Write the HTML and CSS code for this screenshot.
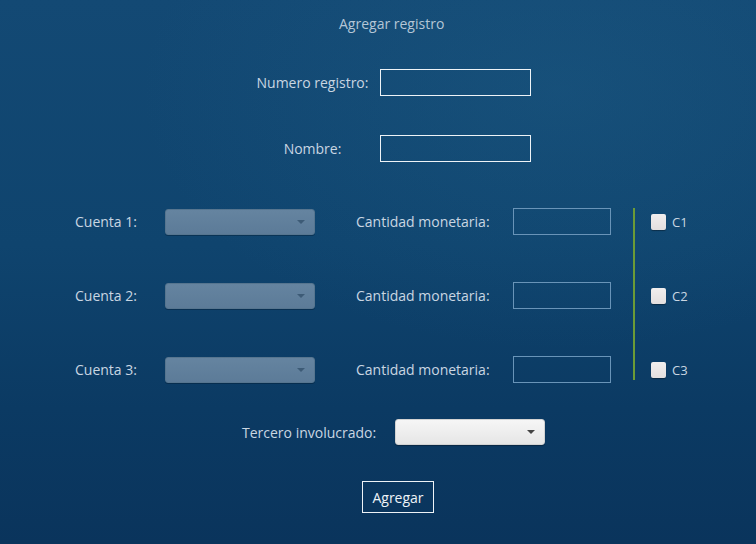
FILE: index.html
```html
<!DOCTYPE html>
<html lang="es">
<head>
<meta charset="utf-8">
<title>Agregar registro</title>
<link rel="stylesheet" href="styles.css">
</head>
<body>
<main class="form">
  <h1 class="title">Agregar registro</h1>

  <div class="pair pair-first">
    <label class="pair-label">Numero registro:</label>
    <input class="field-white" type="text">
  </div>
  <div class="pair pair-second">
    <label class="pair-label">Nombre:</label>
    <input class="field-white" type="text">
  </div>

  <section class="accounts">
    <span class="lbl">Cuenta 1:</span>
    <div class="combo combo-dark"><span class="arrow"></span></div>
    <span class="lbl">Cantidad monetaria:</span>
    <input class="field-blue" type="text">
    <div class="divider"></div>
    <label class="check"><span class="box"></span>C1</label>

    <span class="lbl">Cuenta 2:</span>
    <div class="combo combo-dark"><span class="arrow"></span></div>
    <span class="lbl">Cantidad monetaria:</span>
    <input class="field-blue" type="text">
    <label class="check"><span class="box"></span>C2</label>

    <span class="lbl">Cuenta 3:</span>
    <div class="combo combo-dark"><span class="arrow"></span></div>
    <span class="lbl">Cantidad monetaria:</span>
    <input class="field-blue" type="text">
    <label class="check"><span class="box"></span>C3</label>
  </section>

  <div class="third">
    <span class="lbl third-label">Tercero involucrado:</span>
    <div class="combo combo-light"><span class="arrow"></span></div>
  </div>

  <div class="actions">
    <button class="btn" type="button">Agregar</button>
  </div>
</main>
</body>
</html>
```

FILE: styles.css
```css
html, body {
  margin: 0;
  padding: 0;
  height: 100%;
}

body {
  width: 756px;
  height: 544px;
  overflow: hidden;
  font-family: "Open Sans", "Noto Sans", "Liberation Sans", sans-serif;
  font-size: 14px;
  color: #c6d4e1;
  background:
    radial-gradient(ellipse 420px 260px at 560px 90px, rgba(40, 110, 150, 0.22), rgba(40, 110, 150, 0) 100%),
    linear-gradient(180deg, #134974 0%, #0f446e 45%, #0b3a63 75%, #0a345c 100%);
}

.form {
  display: flex;
  flex-direction: column;
}

.title {
  margin: 14px 0 0 0;
  padding-left: 339px;
  font-size: 14px;
  font-weight: normal;
  line-height: 20px;
  color: #b4c6d6;
}

.pair {
  display: flex;
  align-items: center;
  padding-left: 256px;
}

.pair-first {
  margin-top: 35px;
}

.pair-second {
  margin-top: 39px;
}

.pair-label {
  width: 113px;
  margin-right: 11px;
  text-align: center;
  white-space: nowrap;
  color: #c9d6e2;
}

.field-white {
  box-sizing: border-box;
  width: 151px;
  height: 27px;
  margin: 0;
  border: 1px solid #eef3f7;
  background: transparent;
  outline: none;
}

.accounts {
  display: grid;
  grid-template-columns: 90px 191px 157px 120px 18px auto;
  grid-template-rows: 27px 27px 27px;
  row-gap: 47px;
  align-items: center;
  margin-top: 46px;
  padding-left: 75px;
}

.lbl {
  white-space: nowrap;
  color: #c9d6e2;
}

.combo {
  position: relative;
  box-sizing: border-box;
  width: 150px;
  height: 26px;
  border-radius: 3px;
}

.combo-dark {
  margin-top: 1px;
  background: linear-gradient(180deg, #6584a0 0%, #5c7b98 100%);
  border: 1px solid #56758f;
  box-shadow: 0 1px 0 rgba(0, 20, 40, 0.35);
}

.combo-dark .arrow {
  border-top-color: #3d5b76;
}

.arrow {
  position: absolute;
  right: 9px;
  top: 10px;
  width: 0;
  height: 0;
  border-left: 4px solid transparent;
  border-right: 4px solid transparent;
  border-top: 4px solid #444;
}

.field-blue {
  box-sizing: border-box;
  width: 98px;
  height: 27px;
  margin: 0;
  border: 1px solid #6994b8;
  background: transparent;
  outline: none;
}

.divider {
  grid-column: 5;
  grid-row: 1 / 4;
  align-self: stretch;
  width: 2px;
  margin-bottom: 3px;
  background: #6c9b37;
}

.check {
  grid-column: 6;
  display: flex;
  align-items: center;
  font-size: 13px;
  color: #c9d6e2;
}

.box {
  display: inline-block;
  width: 15px;
  height: 16px;
  margin-right: 6px;
  border-radius: 2px;
  background: linear-gradient(180deg, #f1eeee 0%, #e3dfdf 100%);
  box-shadow: 0 1px 1px rgba(0, 0, 0, 0.35);
}

.third {
  display: flex;
  align-items: center;
  margin-top: 36px;
  padding-left: 242px;
}

.third-label {
  width: 153px;
}

.combo-light {
  background: linear-gradient(180deg, #f6f6f6 0%, #e6e6e6 100%);
  border: 1px solid #d2d2d2;
  box-shadow: 0 1px 1px rgba(0, 0, 0, 0.3);
}

.actions {
  display: flex;
  margin-top: 36px;
  padding-left: 362px;
}

.btn {
  box-sizing: border-box;
  width: 72px;
  height: 32px;
  margin: 0;
  padding: 0;
  border: 1px solid #eef3f7;
  background: transparent;
  color: #eef3f7;
  font-family: "Open Sans", "Noto Sans", "Liberation Sans", sans-serif;
  font-size: 14px;
}
```
